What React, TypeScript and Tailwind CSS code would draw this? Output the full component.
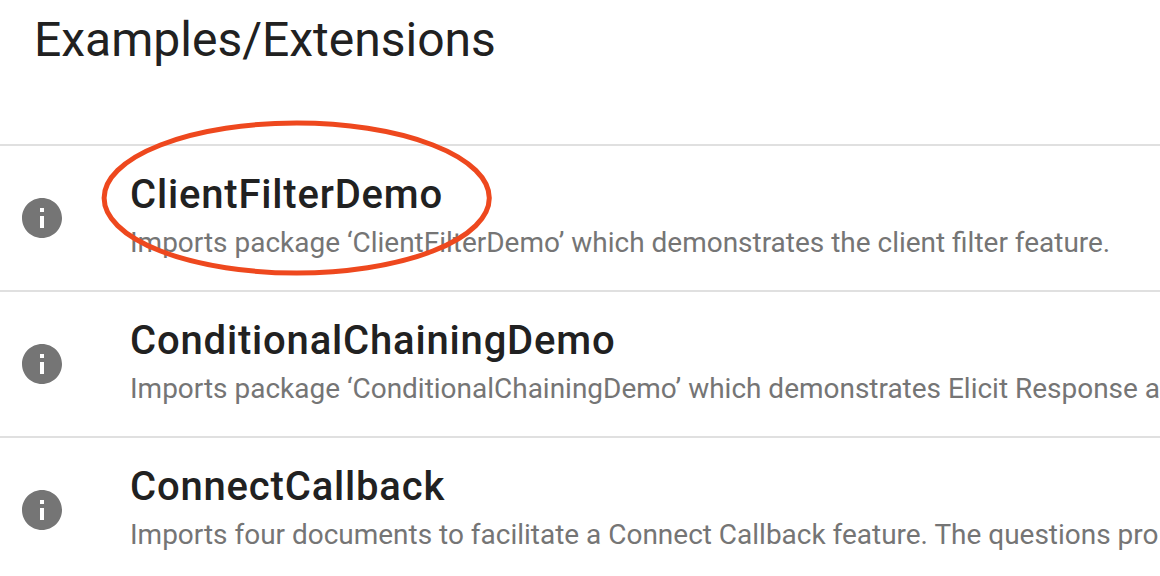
const items = [
  { name: 'ClientFilterDemo', text: 'Imports package ‘ClientFilterDemo’ which demonstrates the client filter feature.' },
  { name: 'ConditionalChainingDemo', text: 'Imports package ‘ConditionalChainingDemo’ which demonstrates Elicit Response a' },
  { name: 'ConnectCallback', text: 'Imports four documents to facilitate a Connect Callback feature. The questions pro' },
];

function InfoIcon() {
  return (
    <svg viewBox="0 0 24 24" className="h-12 w-12 shrink-0 fill-[#757575]">
      <path d="M12 2C6.48 2 2 6.48 2 12s4.48 10 10 10 10-4.48 10-10S17.52 2 12 2zm1 15h-2v-6h2v6zm0-8h-2V7h2v2z" />
    </svg>
  );
}

export default function App() {
  return (
    <main className="relative h-[576px] w-full overflow-hidden bg-white font-['Roboto',sans-serif] text-[#212121]">
      <header className="h-[144px] pt-2 pl-[34px]">
        <h1 className="text-5xl leading-[64px] whitespace-nowrap">Examples/Extensions</h1>
      </header>
      <ul>
        {items.map((item) => (
          <li key={item.name} className="flex h-[146px] items-center border-t-2 border-[#e0e0e0] pl-[18px]">
            <InfoIcon />
            <div className="ml-16 pt-0.5 whitespace-nowrap">
              <h2 className="text-[40px] leading-[48px] font-medium tracking-[0.82px]">{item.name}</h2>
              <p className="text-[27.98px] leading-[48px] text-[#757575]">{item.text}</p>
            </div>
          </li>
        ))}
      </ul>
      <svg className="pointer-events-none absolute top-0 left-0 h-[300px] w-[520px]" viewBox="0 0 520 300" fill="none">
        <ellipse cx="296.7" cy="198" rx="192.6" ry="75" stroke="#ee481e" strokeWidth="5" />
      </svg>
    </main>
  );
}
